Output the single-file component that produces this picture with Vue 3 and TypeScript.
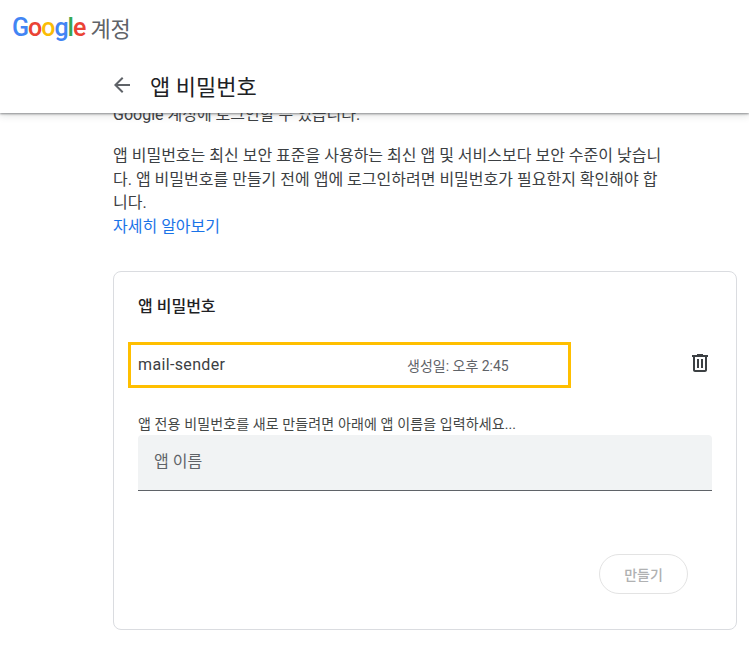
<script setup lang="ts">
const title = '앱 비밀번호'
</script>

<template>
  <div class="page">
    <header class="top">
      <div class="brand">
        <span class="logo"><span class="b">G</span><span class="r">o</span><span class="y">o</span><span class="b">g</span><span class="g">l</span><span class="r">e</span></span>
        <span class="acct">계정</span>
      </div>
      <div class="titlebar">
        <svg class="back" width="24" height="24" viewBox="0 0 24 24"><path d="M20 11H7.83l5.59-5.59L12 4l-8 8 8 8 1.41-1.41L7.83 13H20v-2z" fill="#5f6368"/></svg>
        <h1>{{ title }}</h1>
      </div>
    </header>
    <main class="content">
      <p class="clip">Google 계정에 로그인할 수 있습니다.</p>
      <p class="desc">앱 비밀번호는 최신 보안 표준을 사용하는 최신 앱 및 서비스보다 보안 수준이 낮습니다. 앱 비밀번호를 만들기 전에 앱에 로그인하려면 비밀번호가 필요한지 확인해야 합니다.</p>
      <a class="more">자세히 알아보기</a>
      <section class="card">
        <h2>앱 비밀번호</h2>
        <div class="row">
          <div class="hl">
            <span class="name">mail-sender</span>
            <span class="date">생성일: 오후 2:45</span>
          </div>
          <svg class="trash" width="24" height="24" viewBox="0 0 24 24"><path d="M15 4V3H9v1H4v2h1v13c0 1.1.9 2 2 2h10c1.1 0 2-.9 2-2V6h1V4h-5zm2 15H7V6h10v13zM9 8h2v9H9zm4 0h2v9h-2z" fill="#3c4043"/></svg>
        </div>
        <p class="hint">앱 전용 비밀번호를 새로 만들려면 아래에 앱 이름을 입력하세요...</p>
        <div class="field">앱 이름</div>
        <div class="actions"><button>만들기</button></div>
      </section>
    </main>
  </div>
</template>

<style>
html, body { margin: 0; overflow: hidden; background: #fff; }
</style>

<style scoped>
.page { width: 749px; height: 646px; overflow: hidden; position: relative; font-family: "Roboto", "Noto Sans CJK KR", sans-serif; color: #3c4043; }
.top { position: absolute; top: 0; left: 0; right: 0; height: 113px; background: #fff; box-shadow: 0 1px 2px rgba(60,64,67,.55), 0 2px 8px rgba(60,64,67,.18); z-index: 2; }
.brand { height: 54px; display: flex; align-items: center; padding-left: 12px; }
.logo { font: 500 25px "Roboto", sans-serif; letter-spacing: -1px; }
.b { color: #4285f4; } .r { color: #ea4335; } .y { color: #fbbc05; } .g { color: #34a853; }
.acct { font-size: 22px; color: #5f6368; margin-left: 5px; }
.titlebar { display: flex; align-items: center; height: 62px; padding-left: 110px; }
h1 { margin: 0 0 0 16px; font-size: 22px; font-weight: 400; color: #202124; }
.content { padding: 105px 0 0 113px; }
.content p { margin: 0; }
.clip { font-size: 16px; line-height: 20px; color: #3c4043; }
.desc { width: 556px; margin-top: 19px !important; font-size: 16px; line-height: 23.7px; color: #3c4043; }
.more { display: block; font-size: 16px; line-height: 23.7px; color: #1a73e8; }
.card { width: 624px; height: 359px; box-sizing: border-box; margin-top: 32px; border: 1px solid #dadce0; border-radius: 8px; padding: 24px; }
h2 { margin: 0; font-size: 16px; line-height: 22px; font-weight: 500; color: #202124; }
.row { display: flex; align-items: center; justify-content: space-between; margin: 24px 0 0 -10px; }
.hl { width: 443px; height: 46px; box-sizing: border-box; border: 3px solid #ffbf00; display: flex; align-items: center; padding-left: 7px; }
.name { font-size: 16px; letter-spacing: .35px; width: 269px; color: #3c4043; }
.date { font-size: 14px; color: #5f6368; }
.trash { margin-bottom: 4px; }
.hint { margin-top: 27px !important; font-size: 14px; letter-spacing: .12px; line-height: 18px; color: #444746; }
.field { height: 56px; box-sizing: border-box; margin-top: 2px; background: #f1f3f4; border-bottom: 1px solid #5f6368; border-radius: 4px 4px 0 0; padding: 0 16px 4px; display: flex; align-items: center; font-size: 16px; color: #5f6368; }
.actions { display: flex; justify-content: flex-end; margin-top: 63px; padding-right: 24px; }
button { width: 89px; height: 40px; border: 1px solid #e3e3e3; border-radius: 20px; background: #fff; color: #b0b1b2; font: 500 14px "Roboto", "Noto Sans CJK KR", sans-serif; }
</style>
